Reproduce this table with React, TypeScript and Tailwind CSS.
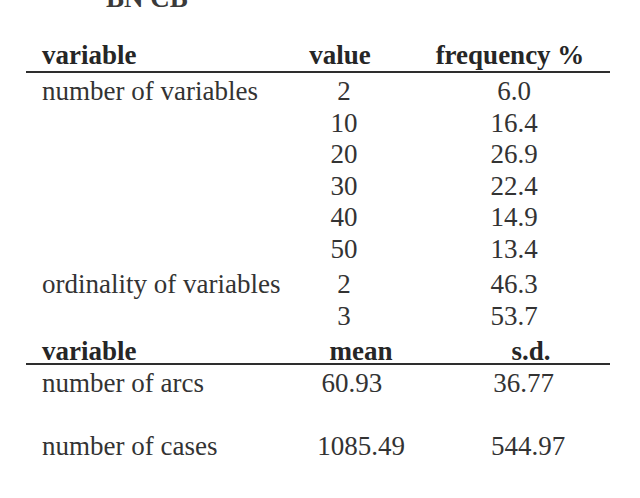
const serif = { fontFamily: '"Liberation Serif", "Times New Roman", serif' };

const freqRows = [
  { label: "number of variables", value: "2", freq: "6.0" },
  { label: "", value: "10", freq: "16.4" },
  { label: "", value: "20", freq: "26.9" },
  { label: "", value: "30", freq: "22.4" },
  { label: "", value: "40", freq: "14.9" },
  { label: "", value: "50", freq: "13.4" },
];

const ordRows = [
  { label: "ordinality of variables", value: "2", freq: "46.3" },
  { label: "", value: "3", freq: "53.7" },
];

const Row = ({ label, value, freq, h }: { label: string; value: string; freq: string; h: string }) => (
  <div className={"flex leading-[32px] " + h}>
    <div className="w-[258px] whitespace-nowrap">{label}</div>
    <div className="w-[88px] text-center">{value}</div>
    <div className="w-[252px] text-center">{freq}</div>
  </div>
);

const App = () => {
  return (
    <div className="w-[640px] h-[498px] bg-white overflow-hidden text-[27px] text-[#333]" style={serif}>
      {/* heading of the previous table, cut off by the crop */}
      <div className="h-[39px] pl-[106px] overflow-hidden">
        <div className="-mt-[18px] leading-[32px] font-bold text-[#3a3a3a]">BN CB</div>
      </div>

      <div className="flex h-[32px] leading-[32px] pl-[42px] font-bold text-[#262626]">
        <div className="w-[258px]">variable</div>
        <div className="w-[80px] text-center">value</div>
        <div className="w-[260px] text-center">frequency %</div>
      </div>
      <div className="ml-[26px] w-[584px] h-[2px] bg-[#2e2e2e]" />

      <div className="pl-[42px] mt-[2px]">
        {freqRows.map((r, i) => (
          <Row key={i} h="h-[31.6px]" {...r} />
        ))}
        <div className="mt-[3.4px]">
          {ordRows.map((r, i) => (
            <Row key={i} h="h-[32px]" {...r} />
          ))}
        </div>
      </div>

      <div className="flex h-[24px] leading-[24px] mt-[7px] pl-[42px] font-bold text-[#262626]">
        <div className="w-[258px]">variable</div>
        <div className="w-[122px] text-center">mean</div>
        <div className="w-[218px] text-center">s.d.</div>
      </div>
      <div className="ml-[26px] w-[584px] h-[2px] bg-[#2e2e2e]" />

      <div className="pl-[42px] mt-[2px]">
        <div className="flex h-[32px] leading-[32px]">
          <div className="w-[258px]">number of arcs</div>
          <div className="w-[112px] text-center">60.93</div>
          <div className="w-[236px] text-center">36.77</div>
        </div>
        <div className="flex h-[32px] leading-[32px] mt-[31px]">
          <div className="w-[258px]">number of cases</div>
          <div className="w-[122px] text-center">1085.49</div>
          <div className="w-[212px] text-center">544.97</div>
        </div>
      </div>
    </div>
  );
};

export default App;
